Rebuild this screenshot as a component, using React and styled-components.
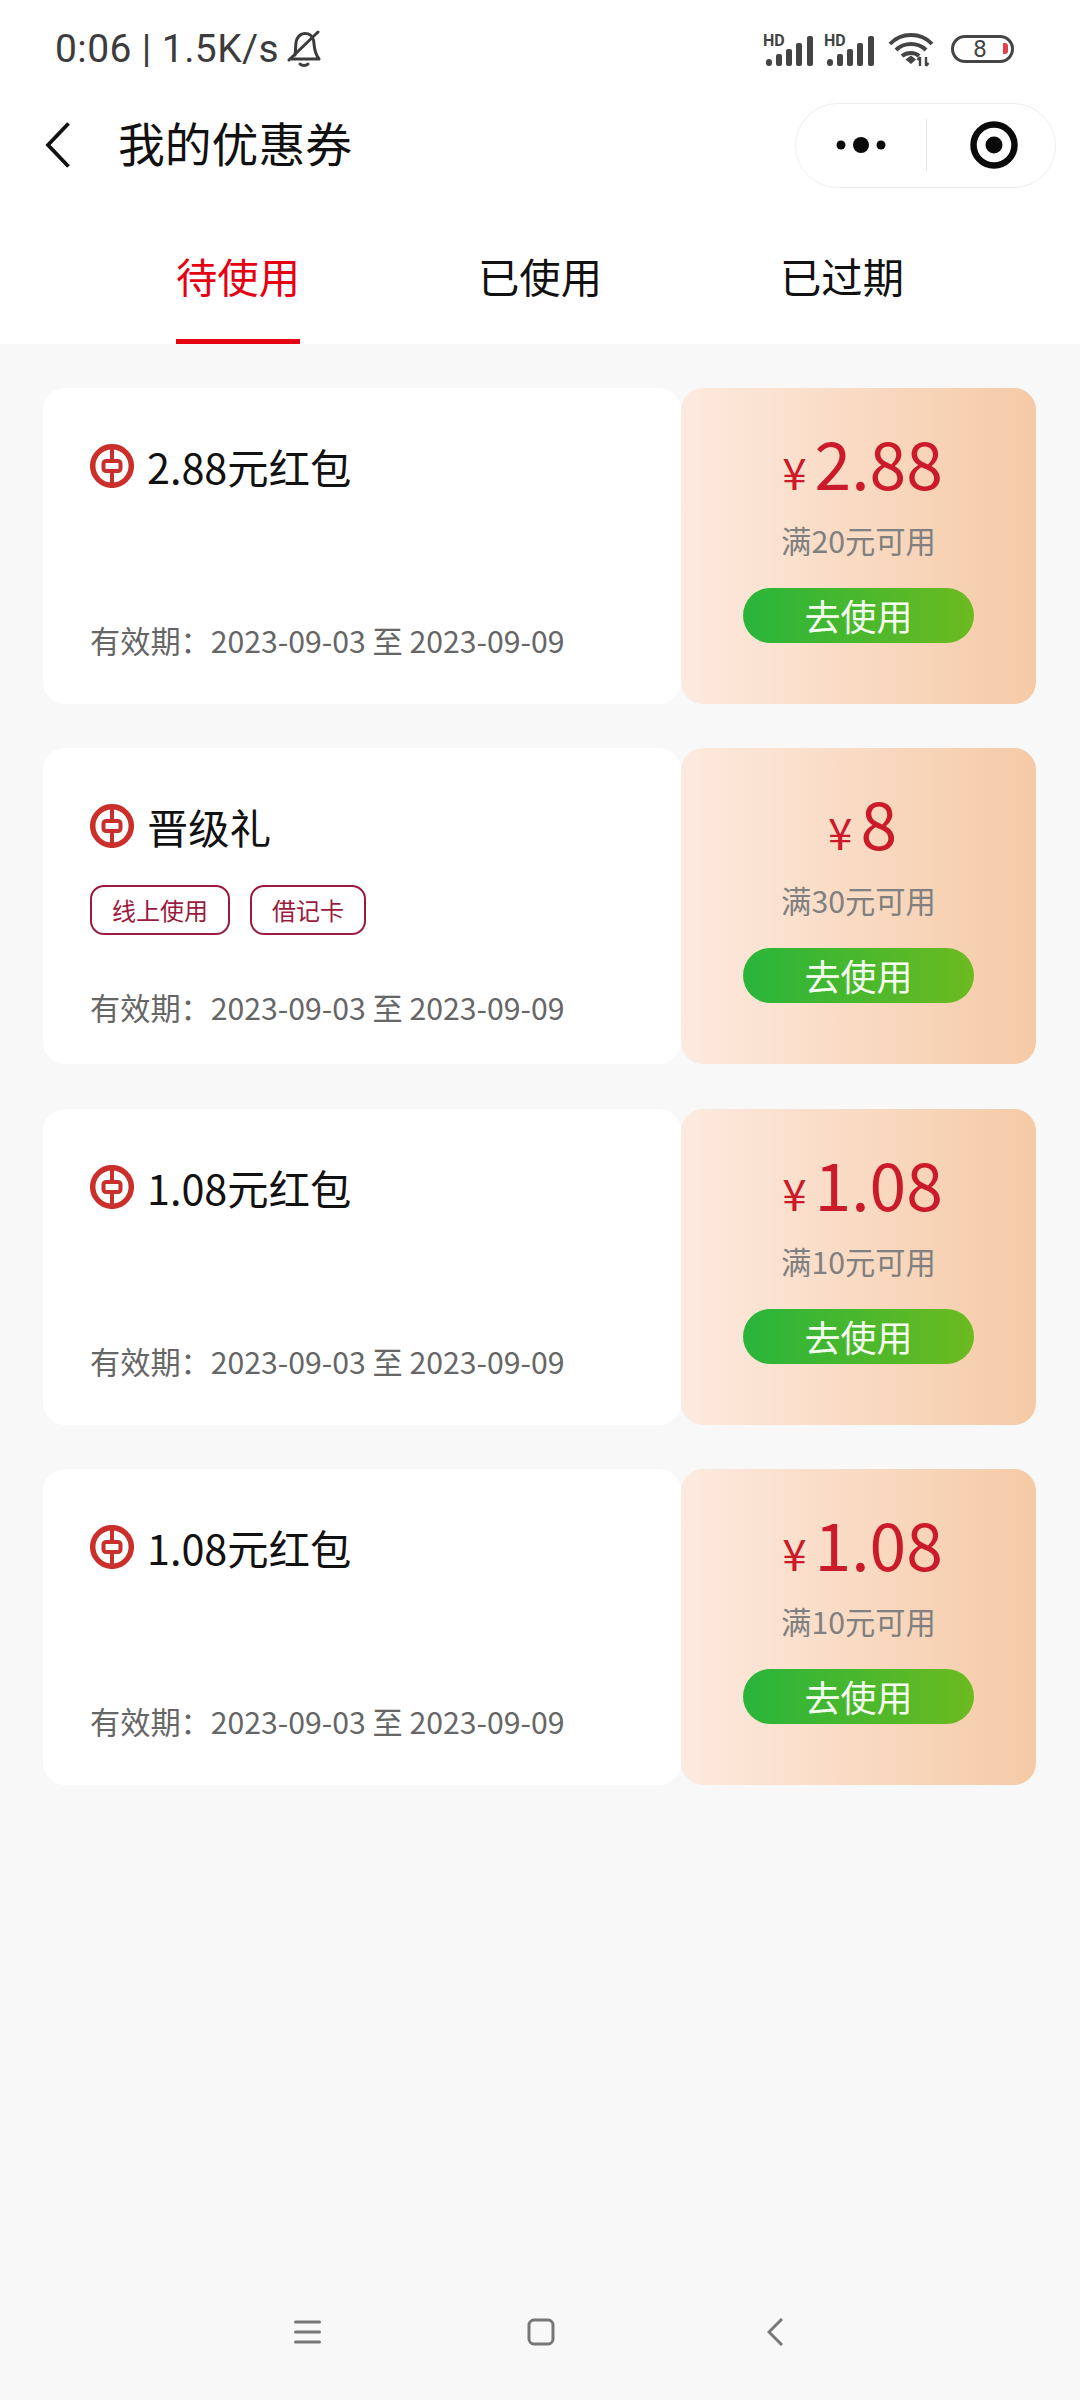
import React from "react";
import styled, { createGlobalStyle } from "styled-components";

const FONT = `"Noto Sans CJK SC", "Noto Sans", sans-serif`;

const Global = createGlobalStyle`
  html, body { margin: 0; padding: 0; background: #f8f8f8; }
  * { box-sizing: border-box; }
  #root { width: 1080px; height: 2400px; }
`;

const Page = styled.div`
  width: 1080px;
  height: 2400px;
  display: flex;
  flex-direction: column;
  background: #f8f8f8;
  font-family: ${FONT};
  overflow: hidden;
`;

const Header = styled.header`
  background: #fff;
  height: 344px;
  display: flex;
  flex-direction: column;
  flex: none;
`;

const StatusBar = styled.div`
  height: 97px;
  padding: 0 66px 0 55px;
  display: flex;
  align-items: center;
  justify-content: space-between;
  color: #3c3c3c;
`;

const StatusLeft = styled.div`
  display: flex;
  align-items: center;
  gap: 8px;
  font-family: Roboto, "Noto Sans", sans-serif;
  font-size: 39px;
  line-height: 44px;
  letter-spacing: 0.4px;
`;

const StatusRight = styled.div`
  display: flex;
  align-items: center;
`;

const SignalGap = styled.span`
  width: 10px;
`;

const WifiSlot = styled.span`
  display: flex;
  margin-left: 13px;
`;

const Battery = styled.div`
  position: relative;
  width: 63px;
  height: 28px;
  margin-left: 17px;
  border: 3px solid #444;
  border-radius: 14px;
  display: flex;
  align-items: center;
  justify-content: center;
  padding-right: 5px;
  font-family: Roboto, sans-serif;
  font-size: 24px;
  line-height: 1;
  color: #444;
`;

const BatteryLevel = styled.i`
  position: absolute;
  right: 3px;
  top: 5px;
  width: 5px;
  height: 11px;
  border-radius: 0 3px 3px 0;
  background: #e0424a;
`;

const NavBar = styled.div`
  height: 96px;
  padding: 0 24px 0 45px;
  display: flex;
  align-items: center;
`;

const Title = styled.h1`
  margin: -6px 0 0 48px;
  flex: 1;
  font-size: 46.800px;
  line-height: 60px;
  font-weight: 400;
  color: #111;
`;

const Capsule = styled.div`
  width: 261px;
  height: 85px;
  border: 1.500px solid #eeeeee;
  border-radius: 43px;
  display: flex;
  align-items: center;
`;

const CapsuleSlot = styled.div`
  flex: ${(p) => (p.$width ? `0 0 ${p.$width}px` : "1")};
  height: 100%;
  display: flex;
  align-items: center;
  justify-content: center;
  padding-left: ${(p) => p.$inset || 0}px;
`;

const CapsuleDivider = styled.div`
  width: 1px;
  height: 52px;
  background: #e6e6e6;
`;

const Tabs = styled.nav`
  flex: 1;
  padding: 0 87px;
  display: flex;
`;

const Tab = styled.div`
  flex: 1;
  display: flex;
  justify-content: center;
`;

const TabLabel = styled.span`
  height: 100%;
  padding-top: 54px;
  border-bottom: 5px solid ${(p) => (p.$active ? "#e60012" : "transparent")};
  font-size: 41.330px;
  line-height: 56px;
  color: ${(p) => (p.$active ? "#e60012" : "#111")};
`;

const List = styled.main`
  padding: 44px 44px 0 43px;
  display: flex;
  flex-direction: column;
  gap: 44.330px;
`;

const Card = styled.article`
  height: 316px;
  display: flex;
`;

const CardMain = styled.div`
  width: 638px;
  background: #fff;
  border-radius: 22px;
  padding: 50px 0 0 47px;
  display: flex;
  flex-direction: column;
`;

const CardTitleRow = styled.div`
  display: flex;
  align-items: center;
  gap: 13px;
  height: 56px;
  font-size: 41.330px;
  line-height: 56px;
  color: #111;
`;

const TagRow = styled.div`
  display: flex;
  gap: 20px;
  margin-top: 31px;
`;

const Tag = styled.span`
  height: 50px;
  padding: 0 20px;
  border: 2px solid #9b1b3d;
  border-radius: 14px;
  display: flex;
  align-items: center;
  font-size: 24px;
  line-height: 32px;
  color: #9b1b3d;
`;

const Validity = styled.div`
  margin-top: auto;
  margin-bottom: ${(p) => (p.$tagged ? "35px" : "42px")};
  font-size: 30.200px;
  line-height: 44px;
  color: #666;
`;

const CardSide = styled.div`
  flex: 1;
  border-radius: 22px;
  background: linear-gradient(90deg, #fdeadf 0%, #f5caa6 100%);
  padding-top: 33px;
  display: flex;
  flex-direction: column;
  align-items: center;
`;

const Amount = styled.div`
  height: 80px;
  padding-left: 8px;
  display: flex;
  align-items: baseline;
  gap: 8px;
  color: #cb1a2a;
  font-size: 66px;
  line-height: 80px;
`;

const Yen = styled.span`
  font-size: 44px;
  line-height: 1;
`;

const Condition = styled.div`
  margin-top: 17px;
  font-size: 30.300px;
  line-height: 44px;
  color: #808080;
`;

const UseButton = styled.button`
  margin-top: 26px;
  width: 231px;
  height: 55px;
  border: 0;
  padding: 0;
  border-radius: 28px;
  background: linear-gradient(90deg, #28b53b 0%, #6cba1f 100%);
  font-family: ${FONT};
  font-size: 36px;
  line-height: 55px;
  color: #f4fff0;
`;

const BottomNav = styled.footer`
  margin-top: auto;
  height: 88px;
  padding: 0 0 0 287px;
  display: flex;
  align-items: flex-start;
  gap: 194px;
  flex: none;
`;

const NavIcon = styled.div`
  width: 40px;
  height: 40px;
  display: flex;
  align-items: center;
  justify-content: center;
`;

const SignalSvg = styled.svg`
  overflow: visible;
`;

const Signal = () => (
  <SignalSvg width="51" height="34" viewBox="0 0 51 34" fill="#444">
    <text x="0" y="14" fontFamily="Roboto, sans-serif" fontWeight="700" fontSize="16" fill="#444">HD</text>
    <rect x="3" y="27" width="6" height="7" rx="3" />
    <rect x="13" y="22" width="6" height="12" rx="2" />
    <rect x="23" y="17" width="6" height="17" rx="2" />
    <rect x="33" y="11" width="6" height="23" rx="2" />
    <rect x="44" y="4" width="6" height="30" rx="2" />
  </SignalSvg>
);

const Wifi = () => (
  <svg width="46" height="36" viewBox="0 0 46 36" fill="none" stroke="#444" strokeWidth="4">
    <path d="M2 13 C13 1 33 1 44 13" />
    <path d="M8 19 C16 11 30 11 38 19" />
    <path d="M14 25 C19 21 27 21 31 25" />
    <path d="M17.500 28.500 L23 24.500 L28 28.500 L23 33 Z" fill="#444" stroke="none" />
    <path d="M32 26 V35 M29.500 29 L32 26 M38 26 V35 M40.500 32 L38 35" strokeWidth="2.400" />
  </svg>
);

const BellSlash = () => (
  <svg width="34" height="38" viewBox="0 0 34 38" fill="none" stroke="#3c3c3c" strokeWidth="3" strokeLinecap="round" strokeLinejoin="round">
    <path d="M8 25 C9 20 8 13 10 9 C12 5 15 3.500 18 3.500 C22 3.500 25.500 6 26.500 10 C27.500 15 26.500 22 32 29 H5" />
    <path d="M2 30 L31 2" />
    <path d="M13 34 C15 36 19 36 21 34" />
  </svg>
);

const Chevron = () => (
  <svg width="25" height="46" viewBox="0 0 25 46" fill="none" stroke="#111" strokeWidth="3.800">
    <path d="M23.500 1.500 L3 23 L23.500 44.500" />
  </svg>
);

const Dots = () => (
  <svg width="50" height="20" viewBox="0 0 50 20" fill="#0a0a0a">
    <circle cx="5" cy="10" r="4.500" />
    <circle cx="25" cy="10" r="8" />
    <circle cx="45" cy="10" r="4.500" />
  </svg>
);

const Target = () => (
  <svg width="48" height="48" viewBox="0 0 48 48">
    <circle cx="24" cy="24" r="20.500" fill="none" stroke="#0a0a0a" strokeWidth="6.500" />
    <circle cx="24" cy="24" r="8.500" fill="#0a0a0a" />
  </svg>
);

const LogoSvg = styled.svg`
  flex: none;
`;

const BankLogo = () => (
  <LogoSvg width="44" height="44" viewBox="0 0 44 44" fill="none" stroke="#ca2f2c">
    <circle cx="22" cy="22" r="19.300" strokeWidth="5.500" />
    <rect x="13.500" y="17" width="17" height="10" rx="2.500" strokeWidth="4" />
    <path d="M22 3 V15 M22 29 V41" strokeWidth="4" />
  </LogoSvg>
);

const MenuIcon = () => (
  <svg width="27" height="24" viewBox="0 0 27 24" stroke="#777" strokeWidth="3" strokeLinecap="round">
    <path d="M1.500 2 H25.500 M1.500 12 H25.500 M1.500 22 H25.500" />
  </svg>
);

const HomeIcon = () => (
  <svg width="28" height="28" viewBox="0 0 28 28" fill="none" stroke="#777" strokeWidth="3">
    <rect x="2" y="2" width="24" height="24" rx="5" />
  </svg>
);

const BackIcon = () => (
  <svg width="16" height="28" viewBox="0 0 16 28" fill="none" stroke="#777" strokeWidth="3">
    <path d="M15 1 L2 14 L15 27" />
  </svg>
);

const coupons = [
  { title: "2.88元红包", amount: "2.88", min: 20 },
  { title: "晋级礼", amount: "8", min: 30, tags: ["线上使用", "借记卡"] },
  { title: "1.08元红包", amount: "1.08", min: 10 },
  { title: "1.08元红包", amount: "1.08", min: 10 },
];

const tabs = ["待使用", "已使用", "已过期"];

export default function App() {
  return (
    <Page>
      <Global />
      <Header>
        <StatusBar>
          <StatusLeft>
            <span>0:06 | 1.5K/s</span>
            <BellSlash />
          </StatusLeft>
          <StatusRight>
            <Signal />
            <SignalGap />
            <Signal />
            <WifiSlot><Wifi /></WifiSlot>
            <Battery>
              8
              <BatteryLevel />
            </Battery>
          </StatusRight>
        </StatusBar>
        <NavBar>
          <Chevron />
          <Title>我的优惠券</Title>
          <Capsule>
            <CapsuleSlot $width={130}>
              <Dots />
            </CapsuleSlot>
            <CapsuleDivider />
            <CapsuleSlot $inset={5}>
              <Target />
            </CapsuleSlot>
          </Capsule>
        </NavBar>
        <Tabs>
          {tabs.map((t, i) => (
            <Tab key={t}>
              <TabLabel $active={i === 0}>{t}</TabLabel>
            </Tab>
          ))}
        </Tabs>
      </Header>
      <List>
        {coupons.map((c, i) => (
          <Card key={i}>
            <CardMain>
              <CardTitleRow>
                <BankLogo />
                <span>{c.title}</span>
              </CardTitleRow>
              {c.tags && (
                <TagRow>
                  {c.tags.map((t) => (
                    <Tag key={t}>{t}</Tag>
                  ))}
                </TagRow>
              )}
              <Validity $tagged={!!c.tags}>有效期：2023-09-03 至 2023-09-09</Validity>
            </CardMain>
            <CardSide>
              <Amount>
                <Yen>¥</Yen>
                <span>{c.amount}</span>
              </Amount>
              <Condition>满{c.min}元可用</Condition>
              <UseButton>去使用</UseButton>
            </CardSide>
          </Card>
        ))}
      </List>
      <BottomNav>
        <NavIcon><MenuIcon /></NavIcon>
        <NavIcon><HomeIcon /></NavIcon>
        <NavIcon><BackIcon /></NavIcon>
      </BottomNav>
    </Page>
  );
}
